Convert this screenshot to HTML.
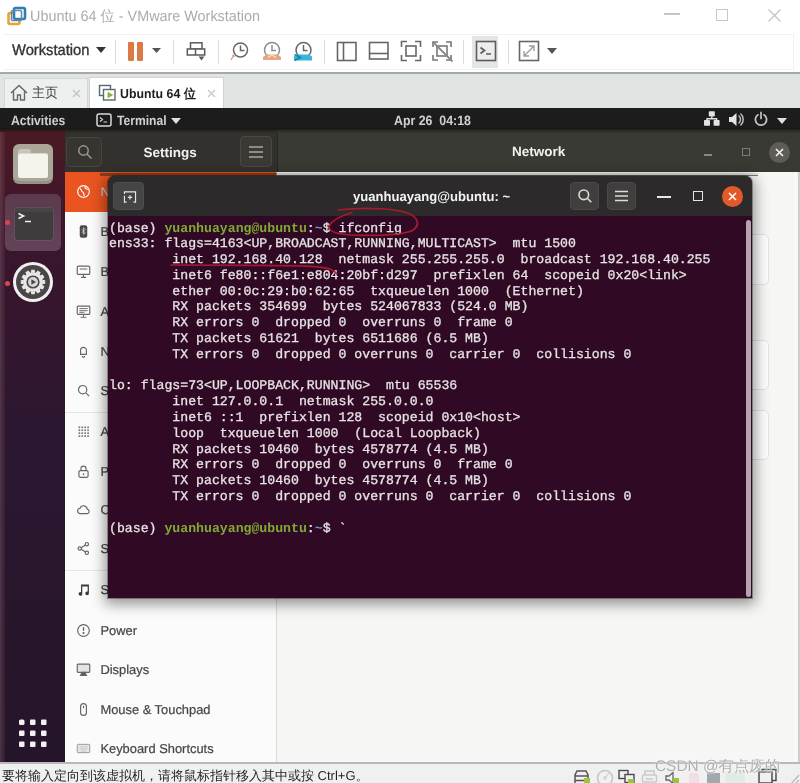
<!DOCTYPE html>
<html lang="en">
<head>
<meta charset="utf-8">
<title>Ubuntu 64 - VMware Workstation</title>
<style>
*{box-sizing:border-box;margin:0;padding:0}
html,body{width:800px;height:783px;overflow:hidden;background:#fff}
body{text-rendering:geometricPrecision;position:relative;font-family:"Liberation Sans",sans-serif;color:#333;filter:blur(.55px)}
.abs{position:absolute}
.cj{display:inline-block;white-space:nowrap;text-align:justify;text-align-last:justify;overflow:hidden;vertical-align:bottom}
.t{position:absolute;white-space:nowrap;line-height:1;transform-origin:0 50%}
/* ---------- VMware chrome ---------- */
#titlebar{left:0;top:0;width:800px;height:32px;background:#fff}
#toolbar{left:0;top:32px;width:800px;height:42px;background:#fff;border-bottom:2px solid #a8a8a8}
#tabbar{left:0;top:74px;width:800px;height:35px;background:#e0e5e4}
.sep{position:absolute;top:40px;width:1px;height:24px;background:#dcdcdc}
.tab{position:absolute;top:78px;height:30px}
/* ---------- Ubuntu ---------- */
#topbar{left:0;top:108px;width:800px;height:21px;background:#1c1c1c}
#dock{left:0;top:131px;width:65px;height:632px;background:linear-gradient(#4a1a23 0,#42172a 70px,#37162d 140px,#2c1730 300px,#25152a 100%)}
#shead{left:65px;top:131px;width:735px;height:42px;background:linear-gradient(90deg,#32312d 0,#32312d 212px,#3a3a35 213px);border-bottom:1.500px solid #272723}
#sidebar{left:65px;top:172px;width:212px;height:591px;background:#fbfbfb;border-right:1px solid #d9d9d9}
#content{left:277px;top:172px;width:523px;height:591px;background:#f6f6f5}
.row{position:absolute;left:0;width:211px;height:40px}
.row .lbl{position:absolute;left:35.400px;top:calc(50% - .6px);transform:translateY(-50%);font-size:12.9px;color:#474747;-webkit-text-stroke:.22px #474747;white-space:nowrap}
.row svg{position:absolute;left:11px;top:50%;margin-top:-8px;width:15px;height:15px}
/* ---------- Terminal ---------- */
#term{left:108px;top:176px;width:644px;height:422px;border-radius:7px 7px 0 0;background:#300a24;box-shadow:0 3px 14px 3px rgba(0,0,0,.42),0 0 0 1px rgba(0,0,0,.3);overflow:hidden}
#thead{left:0;top:0;width:644px;height:40px;background:#2c2a2a}
#tbody{left:1px;top:44.5px;font-family:"Liberation Mono",monospace;font-size:13.19px;line-height:15.8px;color:#e6e3e4;white-space:pre;-webkit-text-stroke:.3px #e6e3e4}
.g,.b{-webkit-text-stroke:0}
.g{color:#7fab35;font-weight:bold}
.b{color:#6d8fbf;font-weight:bold}
#status{left:0;top:762px;width:800px;height:21px;background:#f0f0f0;border-top:2px solid #b9b9b9}
</style>
</head>
<body>

<!-- ================= VMware title bar ================= -->
<div id="titlebar" class="abs">
  <svg class="abs" style="left:7px;top:6px" width="20" height="20" viewBox="0 0 20 20">
    <rect x="1.5" y="7" width="11" height="11" rx="1.5" fill="none" stroke="#e6a23c" stroke-width="2.6"/>
    <rect x="7" y="2" width="11" height="11" rx="1.5" fill="#fff" stroke="#2a7fb8" stroke-width="2.6"/>
    <rect x="4.5" y="4.5" width="10" height="10" rx="1" fill="none" stroke="#6b8a94" stroke-width="1.6"/>
  </svg>
  <div class="t" id="ttl" style="left:30px;top:8.5px;font-size:15px;color:#acacac;transform:scaleX(0.959)">Ubuntu 64 <span class="cj" style="width:15px">位</span> - VMware Workstation</div>
  <div class="abs" style="left:664px;top:13px;width:16px;height:1.5px;background:#c4c4c4"></div>
  <div class="abs" style="left:716px;top:9px;width:12px;height:12px;border:1.5px solid #c8c8c8"></div>
  <svg class="abs" style="left:768px;top:9px" width="13" height="13" viewBox="0 0 13 13"><path d="M.5.5l12 12M12.5.5l-12 12" stroke="#c6c6c6" stroke-width="1.4"/></svg>
</div>
<div id="toolbar" class="abs">
  <div class="abs" style="left:3px;top:2px;width:791px;height:36px;border:1px solid #f1f1f1;border-left:0"></div>
</div>
<div class="t" id="wks" style="left:12px;top:42.8px;font-size:15.5px;color:#333;-webkit-text-stroke:.35px #333;transform:scaleX(0.950)">Workstation</div>
<svg class="abs" style="left:96px;top:47px" width="10" height="6" viewBox="0 0 10 6"><path d="M0 0h10L5 6z" fill="#333"/></svg>
<div class="sep" style="left:115px"></div>
<div class="abs" style="left:128px;top:42px;width:6px;height:19px;background:#dc7a45;border-radius:1px"></div>
<div class="abs" style="left:137px;top:42px;width:6px;height:19px;background:#dc7a45;border-radius:1px"></div>
<svg class="abs" style="left:152px;top:48px" width="9" height="5" viewBox="0 0 9 5"><path d="M0 0h9L4.500 5z" fill="#555"/></svg>
<div class="sep" style="left:173px"></div>
<!-- send ctrl-alt-del -->
<svg class="abs" style="left:186px;top:41px" width="21" height="21" viewBox="0 0 21 21" fill="none" stroke="#5a5a5a" stroke-width="1.500">
  <rect x="4.500" y="1.800" width="11.500" height="6.200"/><rect x="1.300" y="8" width="17.400" height="6" fill="#fff"/><path d="M9.500 8v6"/><path d="M12.500 15.500h6l-3 4z" fill="#5a5a5a" stroke="none"/>
</svg>
<div class="sep" style="left:218px"></div>
<!-- snapshot icons -->
<svg class="abs" style="left:229px;top:40px" width="22" height="22" viewBox="0 0 22 22" fill="none" stroke="#666" stroke-width="1.5">
  <circle cx="11.500" cy="10" r="7"/><path d="M11.500 5.500v5h4"/><path d="M5.500 14l-3.500 6M3 15.500l3 1" stroke="#c9a38a" stroke-width="1.300"/>
</svg>
<svg class="abs" style="left:261px;top:40px" width="22" height="22" viewBox="0 0 22 22" fill="none" stroke="#8d8d8d" stroke-width="1.500">
  <circle cx="11" cy="10" r="7.500"/><path d="M11 5v5.500h4"/><path d="M2 20v-3l3.500-2.500h11l3.500 2.500v3z" fill="#e9a582" stroke="none"/><path d="M7 17.500l4-2.500 4 2.500" stroke="#f7dccd" stroke-width="1.200"/>
</svg>
<svg class="abs" style="left:292px;top:40px" width="22" height="22" viewBox="0 0 22 22" fill="none" stroke="#666" stroke-width="1.500">
  <circle cx="11.500" cy="10" r="7.500"/><path d="M11.500 5v5.500h4"/><path d="M2 20.500v-4l4-2h11l3 2v4z" fill="#37b6d8" stroke="none"/><path d="M2.500 14.500l6 3-6 3" stroke="#1586ae" stroke-width="1.600"/>
</svg>
<div class="sep" style="left:324px"></div>
<!-- view layout icons -->
<svg class="abs" style="left:336px;top:41px" width="22" height="21" viewBox="0 0 22 21" fill="none" stroke="#666" stroke-width="1.600"><rect x="1.500" y="1.500" width="18.500" height="18"/><path d="M7.500 1.500v18"/></svg>
<svg class="abs" style="left:368px;top:41px" width="22" height="20" viewBox="0 0 22 20" fill="none" stroke="#666" stroke-width="1.600"><rect x="1.500" y="1.500" width="18.500" height="16.500"/><path d="M1.500 12.500h18.500"/></svg>
<svg class="abs" style="left:400px;top:40px" width="22" height="22" viewBox="0 0 22 22" fill="none" stroke="#666" stroke-width="1.600">
  <path d="M1.500 7v-5.500h5.500M15 1.500h5.500v5.500M20.500 15v5.500h-5.500M7 20.500h-5.500v-5.500"/><rect x="6" y="6" width="10" height="10"/>
</svg>
<svg class="abs" style="left:431px;top:40px" width="23" height="23" viewBox="0 0 23 23" fill="none" stroke="#777" stroke-width="1.600">
  <path d="M2 7v-5h5M15 2h5v5M20 15v5h-5M7 20h-5v-5"/><rect x="6" y="6" width="10" height="10"/><path d="M2.500 2.500l19 19" stroke="#888" stroke-width="1.800"/>
</svg>
<div class="sep" style="left:463px"></div>
<div class="abs" style="left:472px;top:36px;width:26px;height:32px;background:#e4e6e6"></div>
<svg class="abs" style="left:475px;top:40px" width="22" height="22" viewBox="0 0 22 22" fill="none" stroke="#5c5c5c" stroke-width="1.600">
  <rect x="1.500" y="1.500" width="19" height="19" fill="#ededed"/><path d="M5.500 7.500l4 3-4 3M11 14h5" stroke-width="1.700"/>
</svg>
<div class="sep" style="left:508px"></div>
<svg class="abs" style="left:518px;top:40px" width="22" height="22" viewBox="0 0 22 22" fill="none" stroke="#666" stroke-width="1.600">
  <rect x="1.500" y="1.500" width="19" height="19"/><path d="M6 16l10-10M11 6h5v5M6 11v5h5" stroke="#9a9a9a" stroke-width="1.300"/>
</svg>
<svg class="abs" style="left:547px;top:48px" width="10" height="6" viewBox="0 0 10 6"><path d="M0 0h10L5 6z" fill="#555"/></svg>
<div id="tabbar" class="abs"></div>
<div class="tab" style="left:4px;width:84px;background:#edf0ef;border:1px solid #d3d8d7;border-bottom:0"></div>
<div class="tab" style="left:89px;top:77px;width:135px;height:32px;background:#fff;border:1px solid #cfd4d3;border-bottom:0"></div>
<svg class="abs" style="left:10px;top:84px" width="18" height="17" viewBox="0 0 18 17" fill="none" stroke="#666" stroke-width="1.400"><path d="M1 9l8-7.500 8 7.500M3.500 7.500v8.500h4v-5h3v5h4v-8.500"/></svg>
<div class="t" id="tab1" style="left:32px;top:86px;font-size:13.5px;color:#444;transform:scaleX(0.963)"><span class="cj" style="width:27px">主页</span></div>
<svg class="abs" style="left:72px;top:89px" width="9" height="9" viewBox="0 0 9 9"><path d="M1 1l7 7M8 1l-7 7" stroke="#c2c7c6" stroke-width="1.500"/></svg>
<svg class="abs" style="left:98px;top:84px" width="19" height="19" viewBox="0 0 19 19" fill="none" stroke="#5a6a6a" stroke-width="1.400">
  <rect x="1.500" y="1.500" width="11" height="10"/><rect x="5.500" y="5.500" width="11.500" height="10.500" fill="#fff"/><path d="M10 8.500v5l4.500-2.500z" fill="#8db83c" stroke="#7aa32e" stroke-width=".8"/>
</svg>
<div class="t" id="tab2" style="left:120px;top:86.5px;font-size:13px;font-weight:bold;color:#1e1e1e;transform:scaleX(0.948)">Ubuntu 64 <span class="cj" style="width:13px">位</span></div>
<svg class="abs" style="left:207px;top:89px" width="9" height="9" viewBox="0 0 9 9"><path d="M1 1l7 7M8 1l-7 7" stroke="#c9cdcc" stroke-width="1.500"/></svg>

<!-- ================= Ubuntu desktop ================= -->
<div id="topbar" class="abs"></div>
<div class="t" id="act" style="left:11px;top:113.500px;font-size:13.5px;font-weight:bold;color:#d0d0d0;transform:scaleX(0.903)">Activities</div>
<svg class="abs" style="left:96px;top:113px" width="16" height="14" viewBox="0 0 16 14" fill="none" stroke="#d8d8d8" stroke-width="1.500"><rect x="1" y="1" width="14" height="12" rx="2"/><path d="M4 4.500l2.500 2-2.500 2M7.500 9h3.500" stroke-width="1.200"/></svg>
<div class="t" id="trm" style="left:117px;top:113.500px;font-size:13.5px;font-weight:bold;color:#d0d0d0;transform:scaleX(0.896)">Terminal</div>
<svg class="abs" style="left:171px;top:117.500px" width="10" height="6" viewBox="0 0 10 6"><path d="M0 0h10L5 6z" fill="#e0e0e0"/></svg>
<div class="t" id="clk" style="left:394px;top:113.500px;font-size:13.5px;font-weight:bold;color:#d0d0d0;transform:scaleX(0.916)">Apr 26&nbsp; 04:18</div>
<!-- network -->
<svg class="abs" style="left:703px;top:110px" width="18" height="17" viewBox="0 0 18 17" fill="#e2e2e2"><rect x="5.800" y="1.300" width="6" height="5.200" rx=".8"/><rect x="1" y="10" width="6" height="5.800" rx=".8"/><rect x="10.600" y="10" width="6" height="5.800" rx=".8"/><path d="M8.100 6.500h1.400v1.600h4.800v2h-1.400v-.7h-8.200v.7h-1.400v-2h4.800z"/></svg>
<!-- volume -->
<svg class="abs" style="left:728px;top:111px" width="17" height="17" viewBox="0 0 17 17" fill="#e4e4e4"><path d="M1 6h3l4.500-4v13l-4.500-4h-3z"/><path d="M10.500 4.500a5 5 0 0 1 0 8M12.500 2.500a8 8 0 0 1 0 12" fill="none" stroke="#bdbdbd" stroke-width="1.500"/></svg>
<!-- power -->
<svg class="abs" style="left:752.500px;top:111px" width="16" height="16" viewBox="0 0 16 16" fill="none" stroke="#c4c4c4" stroke-width="1.700" stroke-linecap="round"><path d="M5 3.800a5.600 5.600 0 1 0 6 0M8 1.300v6.200"/></svg>
<svg class="abs" style="left:777px;top:117.500px" width="10" height="6" viewBox="0 0 10 6"><path d="M0 0h10L5 6z" fill="#e0e0e0"/></svg>
<div id="dock" class="abs">
  <div class="abs" style="left:0;top:0;width:5px;height:632px;background:linear-gradient(90deg,rgba(150,110,120,.35),rgba(120,80,100,.12))"></div>
  <!-- Files -->
  <div class="abs" style="left:13px;top:13px;width:40px;height:40px;border-radius:6px;background:#aaa698;box-shadow:inset 0 -3px 0 rgba(0,0,0,.12)"></div>
  <div class="abs" style="left:18px;top:18px;width:13px;height:8px;border-radius:3px 3px 0 0;background:#c9c6bb"></div>
  <div class="abs" style="left:18px;top:23px;width:30px;height:24px;border-radius:2px;background:#f4f3ec;box-shadow:0 -1px 0 #d9d6cc"></div>
  <!-- Terminal (active) -->
  <div class="abs" style="left:5px;top:63px;width:56px;height:57px;border-radius:6px;background:linear-gradient(#5c3a4e,#634358)"></div>
  <div class="abs" style="left:15px;top:77px;width:38px;height:32px;border-radius:3px;background:#3e3c3d;box-shadow:0 0 0 1px rgba(255,255,255,.07)"></div>
  <div class="abs" style="left:15px;top:77px;width:38px;height:4px;border-radius:3px 3px 0 0;background:#484446"></div>
  <svg class="abs" style="left:17px;top:81px" width="16" height="12" viewBox="0 0 16 12" fill="none" stroke="#efefef" stroke-width="1.700"><path d="M1.500 1.500l5 2.500-5 2.500M8 9.500h6"/></svg>
  <div class="abs" style="left:4.500px;top:88.500px;width:5px;height:5px;border-radius:50%;background:#d8474a"></div>
  <!-- Settings -->
  <div class="abs" style="left:13px;top:131px;width:40px;height:40px;border-radius:50%;background:#f2f0ef"></div>
  <div class="abs" style="left:16px;top:134px;width:34px;height:34px;border-radius:50%;background:#4a4647"></div>
  <svg class="abs" style="left:19px;top:137px" width="28" height="28" viewBox="-14 -14 28 28">
    <g fill="#e9e6e6"><circle r="9.800"/>
      <path d="M-1.700 -12.200h3.400l.6 3h-4.600z" transform="rotate(0)"/><path d="M-1.700 -12.200h3.400l.6 3h-4.600z" transform="rotate(30)"/><path d="M-1.700 -12.200h3.400l.6 3h-4.600z" transform="rotate(60)"/><path d="M-1.700 -12.200h3.400l.6 3h-4.600z" transform="rotate(90)"/><path d="M-1.700 -12.200h3.400l.6 3h-4.600z" transform="rotate(120)"/><path d="M-1.700 -12.200h3.400l.6 3h-4.600z" transform="rotate(150)"/><path d="M-1.700 -12.200h3.400l.6 3h-4.600z" transform="rotate(180)"/><path d="M-1.700 -12.200h3.400l.6 3h-4.600z" transform="rotate(210)"/><path d="M-1.700 -12.200h3.400l.6 3h-4.600z" transform="rotate(240)"/><path d="M-1.700 -12.200h3.400l.6 3h-4.600z" transform="rotate(270)"/><path d="M-1.700 -12.200h3.400l.6 3h-4.600z" transform="rotate(300)"/><path d="M-1.700 -12.200h3.400l.6 3h-4.600z" transform="rotate(330)"/>
    </g>
    <circle r="6.600" fill="#4a4647"/><circle r="5" fill="#d9d6d6"/><path d="M-1.600 -2.800v5.600l4.600 -2.800z" fill="#4a4647"/>
  </svg>
  <div class="abs" style="left:4.500px;top:149.500px;width:5px;height:5px;border-radius:50%;background:#d8474a"></div>
  <!-- Show applications -->
  <svg class="abs" style="left:18px;top:586.800px" width="30" height="30" viewBox="0 0 30 30" fill="#f3f1f2">
    <rect x="1" y="1.500" width="5.500" height="5.500" rx="1.600"/><rect x="12" y="1.500" width="5.500" height="5.500" rx="1"/><rect x="23" y="1.500" width="5.500" height="5.500" rx="1"/>
    <rect x="1" y="12.500" width="5.500" height="5.500" rx="1"/><rect x="12" y="12.500" width="5.500" height="5.500" rx="1"/><rect x="23" y="12.500" width="5.500" height="5.500" rx="1"/>
    <rect x="1" y="23.500" width="5.500" height="5.500" rx="1"/><rect x="12" y="23.500" width="5.500" height="5.500" rx="1"/><rect x="23" y="23.500" width="5.500" height="5.500" rx="1"/>
  </svg>
</div>
<div id="shead" class="abs">
  <div class="abs" style="left:1px;top:6px;width:36px;height:30px;border-radius:4px;border:1px solid #46443f;background:#37352f"></div>
  <svg class="abs" style="left:12px;top:13px" width="16" height="16" viewBox="0 0 16 16" fill="none" stroke="#9a9892" stroke-width="1.500"><circle cx="6.500" cy="6.500" r="4.700"/><path d="M10 10l4.500 4.500"/></svg>
  <div class="abs" style="left:175px;top:5px;width:32px;height:31px;border-radius:4px;border:1px solid #4a4843;background:#3b3934"></div>
  <svg class="abs" style="left:183px;top:14px" width="16" height="14" viewBox="0 0 16 14" stroke="#a8a6a0" stroke-width="1.500"><path d="M1 2h14M1 7h14M1 12h14"/></svg>
  <div class="abs" style="left:212px;top:0;width:1px;height:41px;background:#26251f"></div>
  <div class="abs" style="left:639px;top:23px;width:8px;height:2px;background:#8a8882"></div>
  <div class="abs" style="left:677px;top:17px;width:8px;height:8px;border:1.500px solid #7e7c76"></div>
  <div class="abs" style="left:704px;top:11px;width:21px;height:21px;border-radius:50%;background:#5f5d58"></div>
  <svg class="abs" style="left:710px;top:17px" width="9" height="9" viewBox="0 0 9 9"><path d="M1 1l7 7M8 1l-7 7" stroke="#f4f4f2" stroke-width="1.600"/></svg>
</div>
<div class="abs" style="left:0;top:128.500px;width:65px;height:3px;background:#4a1a23"></div>
<div class="abs" style="left:65px;top:128.500px;width:212px;height:3px;background:#32312d"></div>
<div class="abs" style="left:277px;top:128.500px;width:523px;height:3px;background:#3a3a35"></div>
<div class="abs" style="left:0;top:128px;width:800px;height:5px;background:linear-gradient(rgba(22,22,20,.95),rgba(22,22,20,.55) 45%,rgba(22,22,20,0))"></div>
<div class="t" id="sett" style="left:143.400px;top:145.500px;font-size:13.5px;font-weight:bold;color:#f1f1ef">Settings</div>
<div class="t" id="netw" style="left:512px;top:145px;font-size:13.5px;font-weight:bold;color:#f1f1ef">Network</div>
<div id="sidebar" class="abs">
  <div class="row" style="top:0px;background:#e95420"><svg viewBox="0 0 18 18" fill="none" stroke="#fff" stroke-width="1.400"><circle cx="9" cy="9" r="7"/><path d="M5 5.500c2 1.500 1 3 3 4s1 3 2 5M11 3c-1 2 1 3 3 3.500"/></svg><span class="lbl" id="l0" style="color:#fff">Network</span></div>
  <div class="row" style="top:39.5px"><svg viewBox="0 0 18 18"><rect x="4.500" y="1.500" width="9" height="15" rx="2.500" fill="#4a4a4a"/><path d="M7 6.500l4 4-2 2v-8l2 2-4 4" fill="none" stroke="#cfcfcf" stroke-width="1"/></svg><span class="lbl" id="l1">Bluetooth</span></div>
  <div class="row" style="top:80px"><svg viewBox="0 0 18 18" fill="none" stroke="#666" stroke-width="1.400"><rect x="1.500" y="2.500" width="15" height="10" rx="1.500"/><path d="M6 16h6M9 12.500v3.500M4.500 6h9" /></svg><span class="lbl" id="l2">Background</span></div>
  <div class="row" style="top:120px"><svg viewBox="0 0 18 18" fill="none" stroke="#666" stroke-width="1.400"><rect x="1.500" y="2.500" width="15" height="10" rx="1"/><path d="M5.500 16h7M9 12.500v3.500M4 5.500h10M4 8h10M4 10h6" stroke-width="1.100"/></svg><span class="lbl" id="l3">Appearance</span></div>
  <div class="row" style="top:160px"><svg viewBox="0 0 18 18" fill="none" stroke="#666" stroke-width="1.400"><path d="M5.500 12.500v-5a3.500 3.500 0 0 1 7 0v5zM7.500 14.500a1.500 1.500 0 0 0 3 0"/></svg><span class="lbl" id="l4">Notifications</span></div>
  <div class="row" style="top:198.5px"><svg viewBox="0 0 18 18" fill="none" stroke="#666" stroke-width="1.400"><circle cx="8" cy="8" r="5"/><path d="M11.800 11.800l4 4"/></svg><span class="lbl" id="l5">Search</span></div>
  <div class="row" style="top:239.5px"><svg viewBox="0 0 18 18" fill="#777"><rect x="3" y="3" width="2" height="2"/><rect x="6.5" y="3" width="2" height="2"/><rect x="10" y="3" width="2" height="2"/><rect x="13.5" y="3" width="2" height="2"/><rect x="3" y="6.5" width="2" height="2"/><rect x="6.5" y="6.5" width="2" height="2"/><rect x="10" y="6.5" width="2" height="2"/><rect x="13.5" y="6.5" width="2" height="2"/><rect x="3" y="10" width="2" height="2"/><rect x="6.5" y="10" width="2" height="2"/><rect x="10" y="10" width="2" height="2"/><rect x="13.5" y="10" width="2" height="2"/><rect x="3" y="13.5" width="2" height="2"/><rect x="6.5" y="13.5" width="2" height="2"/><rect x="10" y="13.5" width="2" height="2"/><rect x="13.5" y="13.5" width="2" height="2"/></svg><span class="lbl" id="l6">Applications</span></div>
  <div class="row" style="top:280px"><svg viewBox="0 0 18 18" fill="none" stroke="#666" stroke-width="1.400"><rect x="3.500" y="8" width="11" height="8" rx="1.500"/><path d="M6 8v-2.500a3 3 0 0 1 6 0v2.500M9 11v2.500"/></svg><span class="lbl" id="l7">Privacy</span></div>
  <div class="row" style="top:318px"><svg viewBox="0 0 18 18" fill="none" stroke="#666" stroke-width="1.400"><path d="M4.500 14a3.300 3.300 0 0 1 .3-6.500 4.500 4.500 0 0 1 8.700 1 2.800 2.800 0 0 1 0 5.500z"/></svg><span class="lbl" id="l8">Online Accounts</span></div>
  <div class="row" style="top:357px"><svg viewBox="0 0 18 18" fill="none" stroke="#666" stroke-width="1.400"><circle cx="13" cy="3.800" r="2"/><circle cx="13" cy="14.200" r="2"/><circle cx="4.500" cy="9" r="2"/><path d="M6.300 8l5-3.200M6.300 10l5 3.200"/></svg><span class="lbl" id="l9">Sharing</span></div>
  <div class="row" style="top:398px"><svg viewBox="0 0 18 18" fill="#3a3a3a"><path d="M6 3h9.500v10.500a2.200 2.200 0 1 1-1.500-2v-6h-6.500v8.800a2.200 2.200 0 1 1-1.500-2z"/></svg><span class="lbl" id="l10">Sound</span></div>
  <div class="row" style="top:439px"><svg viewBox="0 0 18 18" fill="none" stroke="#666" stroke-width="1.400"><circle cx="9" cy="9" r="7"/><path d="M9 5v4.500" stroke-width="1.600"/><circle cx="9" cy="12" r=".6" fill="#5a5a5a"/></svg><span class="lbl" id="l11">Power</span></div>
  <div class="row" style="top:478px"><svg viewBox="0 0 18 18" fill="none" stroke="#666" stroke-width="1.400"><rect x="1.500" y="2.500" width="15" height="10" rx="1" fill="#e4e4e4"/><path d="M5.500 16h7l-2-3.500h-3z" fill="#5a5a5a"/></svg><span class="lbl" id="l12">Displays</span></div>
  <div class="row" style="top:518px"><svg viewBox="0 0 18 18" fill="none" stroke="#666" stroke-width="1.400"><rect x="5.500" y="2" width="7" height="14" rx="3.500"/><path d="M9 4.500v3"/></svg><span class="lbl" id="l13">Mouse &amp; Touchpad</span></div>
  <div class="row" style="top:557px"><svg viewBox="0 0 18 18" fill="none" stroke="#9a9a9a" stroke-width="1.200"><rect x="1.500" y="4" width="15" height="10" rx="1" fill="#e8e8e8"/><path d="M4 7h10M4 9.500h10M6 12h6" stroke="#c4c4c4"/></svg><span class="lbl" id="l14">Keyboard Shortcuts</span></div>
  <div class="abs" style="left:0;top:240px;width:211px;height:1px;background:#e6e6e6"></div>
  <div class="abs" style="left:0;top:398px;width:211px;height:1px;background:#e6e6e6"></div>
</div>
<div id="content" class="abs">
  <div class="abs" style="left:110px;top:62px;width:382px;height:51px;background:#fcfcfc;border:1px solid #e3e3e2;border-radius:5px"></div>
  <div class="abs" style="left:110px;top:168px;width:382px;height:50px;background:#fcfcfc;border:1px solid #e3e3e2;border-radius:5px"></div>
  <div class="abs" style="left:110px;top:238px;width:382px;height:50px;background:#fcfcfc;border:1px solid #e3e3e2;border-radius:5px"></div>
  <div class="abs" style="left:518px;top:0;width:1px;height:591px;background:#fdfdfd"></div>
  <div class="abs" style="left:521px;top:0;width:2px;height:591px;background:#cfcfcf"></div>
</div>

<!-- ================= Terminal window ================= -->
<div class="abs" style="left:100px;top:173px;width:177px;height:3px;background:rgba(45,35,40,.5)"></div>
<div class="abs" style="left:277px;top:173px;width:481px;height:3px;background:linear-gradient(rgba(40,40,40,.1) 0,rgba(40,40,40,.1) 2.200px,rgba(20,20,20,.55) 2.500px)"></div>
<div id="term" class="abs">
<div id="thead" class="abs">
  <div class="abs" style="left:5px;top:6px;width:31px;height:28px;border-radius:4px;background:#454545;border:1px solid #4d4d4d"></div>
  <svg class="abs" style="left:14.500px;top:15px" width="14" height="12" viewBox="0 0 15 14" fill="none" stroke="#e8e8e8" stroke-width="1.300"><path d="M1 3.500v-2.500h13v12h-2.500M1 5.500v7.500h2.500"/><path d="M7.500 5v5M5 7.500h5"/></svg>
  <div class="abs" style="left:462px;top:6px;width:29px;height:28px;border-radius:4px;background:#413f3d;border:1px solid #4c4a48"></div>
  <svg class="abs" style="left:469px;top:12px" width="16" height="16" viewBox="0 0 16 16" fill="none" stroke="#dcdcdc" stroke-width="1.600"><circle cx="6.800" cy="6.800" r="4.800"/><path d="M10.300 10.300l4 4"/></svg>
  <div class="abs" style="left:499px;top:6px;width:29px;height:28px;border-radius:4px;background:#413f3d;border:1px solid #4c4a48"></div>
  <svg class="abs" style="left:507px;top:14px" width="13" height="12" viewBox="0 0 13 12" stroke="#dcdcdc" stroke-width="1.500"><path d="M0 1.500h13M0 6h13M0 10.500h13"/></svg>
  <div class="abs" style="left:549px;top:20px;width:14px;height:2px;background:#e6e6e6"></div>
  <div class="abs" style="left:585px;top:15px;width:10px;height:10px;border:1.700px solid #e6e6e6"></div>
  <div class="abs" style="left:614px;top:9.500px;width:21px;height:21px;border-radius:50%;background:#e25a2a"></div>
  <svg class="abs" style="left:620px;top:15.500px" width="9" height="9" viewBox="0 0 9 9"><path d="M1 1l7 7M8 1l-7 7" stroke="#fff" stroke-width="1.500"/></svg>
  <div class="t" id="tt" style="left:244.600px;top:14px;font-size:13.5px;font-weight:bold;color:#f3f3f3;transform:scaleX(.969)">yuanhuayang@ubuntu: ~</div>
</div>
<div class="abs" style="left:637.500px;top:44px;width:5px;height:377px;border-radius:3px;background:#b5a3b0"></div>
<div id="tbody" class="abs">(base) <span class="g">yuanhuayang@ubuntu</span>:<span class="b">~</span>$ ifconfig
ens33: flags=4163&lt;UP,BROADCAST,RUNNING,MULTICAST&gt;  mtu 1500
        inet 192.168.40.128  netmask 255.255.255.0  broadcast 192.168.40.255
        inet6 fe80::f6e1:e804:20bf:d297  prefixlen 64  scopeid 0x20&lt;link&gt;
        ether 00:0c:29:b0:62:65  txqueuelen 1000  (Ethernet)
        RX packets 354699  bytes 524067833 (524.0 MB)
        RX errors 0  dropped 0  overruns 0  frame 0
        TX packets 61621  bytes 6511686 (6.5 MB)
        TX errors 0  dropped 0 overruns 0  carrier 0  collisions 0

lo: flags=73&lt;UP,LOOPBACK,RUNNING&gt;  mtu 65536
        inet 127.0.0.1  netmask 255.0.0.0
        inet6 ::1  prefixlen 128  scopeid 0x10&lt;host&gt;
        loop  txqueuelen 1000  (Local Loopback)
        RX packets 10460  bytes 4578774 (4.5 MB)
        RX errors 0  dropped 0  overruns 0  frame 0
        TX packets 10460  bytes 4578774 (4.5 MB)
        TX errors 0  dropped 0 overruns 0  carrier 0  collisions 0

(base) <span class="g">yuanhuayang@ubuntu</span>:<span class="b">~</span>$ `</div>
</div>

<!-- ================= red pen annotations ================= -->
<svg class="abs" style="left:0;top:0" width="800" height="783" viewBox="0 0 800 783" fill="none" stroke="#b01a30" stroke-width="1.700" stroke-linecap="round" opacity=".92">
  <path d="M338 210 C350 208.300 370 208 385 209 C398 210 410 212.500 415 217.500 C418.500 221.500 418 226 414 229.500 C408 233.500 392 235.300 372 235.400 C356 235.500 342 235 335 232.500 C329 230.500 327.500 227.500 330 224.500 C333 220.500 340 216 352 212.500"/>
  <path d="M171 265 C200 265.300 260 265.300 300 265.800 C315 266.200 326 267.500 331 269.500 C334 270.800 335.500 272 336.500 273.500"/>
</svg>

<!-- ================= VMware status bar ================= -->
<div id="status" class="abs">
  <div class="t" id="stx" style="left:2px;top:4.500px;font-size:13px;color:#1f1f1f"><span class="cj" style="width:312px">要将输入定向到该虚拟机，请将鼠标指针移入其中或按</span> Ctrl+G<span class="cj" style="width:13px">。</span></div>
  <!-- device icons (cropped by window bottom) -->
  <svg class="abs" style="left:570px;top:2px" width="230" height="19" viewBox="0 0 230 19" fill="none">
    <g stroke="#555" stroke-width="1.500"><path d="M5 17v-8l2-4h9l2 4v8M5 10h13M5 14.500h13"/></g><rect x="14" y="12" width="6" height="7" fill="#9bc53d"/>
    <circle cx="35" cy="12" r="7.500" stroke="#c3c8c8" stroke-width="1.600"/><circle cx="35" cy="12" r="2" fill="#d5d9d9"/><path d="M35 12l4-5" stroke="#c3c8c8"/>
    <g stroke="#4a4a4a" stroke-width="1.400"><rect x="49" y="4.500" width="9" height="8"/><rect x="55" y="8.500" width="9" height="8" fill="#f0f0f0"/></g><rect x="58" y="13" width="6" height="6" fill="#9bc53d"/>
    <g stroke="#c5caca" stroke-width="1.500"><path d="M75 9v-4h9v4"/><rect x="72.500" y="9" width="14" height="7" rx="1"/><path d="M76 13h7"/></g>
    <g stroke="#666" stroke-width="1.300"><path d="M96 10h3l4-3.500v11l-4-3.500h-3z"/></g><rect x="103" y="12" width="6" height="7" fill="#9bc53d"/>
    <rect x="119" y="7" width="10" height="12" rx="2" fill="#f1dde6"/>
    <rect x="137" y="7" width="13" height="12" fill="#a2a9ad"/>
    <rect x="155" y="7" width="20" height="12" fill="#e3ebe7"/>
    <g stroke="#4e4e4e" stroke-width="1.500"><rect x="189" y="6" width="13" height="11"/><path d="M192 6v-2.500h14v11h-4"/></g>
    <path d="M229 9l-9 10M229 14l-5 5" stroke="#b5b5b5" stroke-width="1.200"/>
  </svg>
</div>
<div class="t" id="wm" style="left:655px;top:758.500px;font-size:15.4px;color:rgba(120,120,120,.6);text-shadow:0 0 1px #fff,0 0 2px #fff">CSDN @<span class="cj" style="width:61.600px">有点废的</span></div>

</body>
</html>
